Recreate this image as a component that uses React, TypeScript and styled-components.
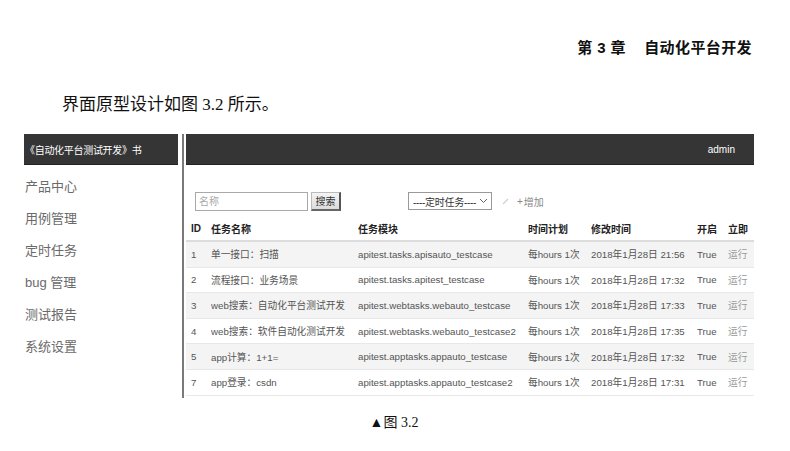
import React from "react";
import styled, { createGlobalStyle } from "styled-components";

const Global = createGlobalStyle`
  html, body { margin: 0; padding: 0; background: #fff; }
  body { font-family: "Liberation Sans", "Noto Sans CJK SC", sans-serif; }
`;

const Page = styled.div`
  width: 790px;
  height: 451px;
  position: relative;
  overflow: hidden;
  background: #fff;
`;

const ChapterHead = styled.div`
  padding: 38px 38px 0 0;
  text-align: right;
  font-family: "Liberation Sans", "Noto Sans CJK SC", sans-serif;
  font-weight: 700;
  font-size: 15px;
  line-height: 20px;
  letter-spacing: 0.4px;
  color: #111;
  white-space: pre;
`;

const Para = styled.p`
  margin: 35px 0 0 62px;
  font-family: "Liberation Serif", "Noto Sans CJK SC", serif;
  font-size: 17px;
  line-height: 24px;
  color: #111;
`;

const Figure = styled.div`
  margin: 17px 0 0 24px;
  width: 730px;
  height: 264px;
  display: flex;
`;

const Sidebar = styled.div`
  width: 154px;
  display: flex;
  flex-direction: column;
`;

const DarkBar = styled.div<{ $justify?: string }>`
  height: 31px;
  background: #353535;
  border-bottom: 1px solid #222;
  box-sizing: border-box;
  display: flex;
  align-items: center;
  justify-content: ${(p) => p.$justify || "flex-start"};
  color: #fff;
  font-size: 10px;
  font-family: "Liberation Sans", "Noto Sans CJK SC", sans-serif;
`;

const BrandText = styled.span`
  padding-left: 1px;
  letter-spacing: -0.3px;
`;

const AdminText = styled.span`
  padding-right: 19px;
`;

const NavList = styled.div`
  padding-top: 6px;
  display: flex;
  flex-direction: column;
`;

const NavItem = styled.div`
  height: 32px;
  line-height: 32px;
  padding-left: 1px;
  font-size: 13px;
  color: #6a6a6a;
`;

const Divider = styled.div`
  width: 2px;
  background: #7a7a7a;
  margin: 0 2px 0 4px;
`;

const Main = styled.div`
  flex: 1;
  display: flex;
  flex-direction: column;
`;

const Content = styled.div`
  padding-top: 26px;
`;

const Toolbar = styled.div`
  display: flex;
  align-items: center;
  height: 20px;
  padding-left: 9px;
`;

const SearchInput = styled.div`
  width: 113px;
  height: 19px;
  box-sizing: border-box;
  border: 1px solid #a9a9a9;
  font-size: 10px;
  color: #aaa;
  line-height: 17px;
  padding-left: 3px;
`;

const SearchButton = styled.div`
  margin-left: 3px;
  width: 30px;
  height: 19px;
  box-sizing: border-box;
  border: 1px solid #bbb;
  border-right: 2px solid #555;
  border-bottom: 2px solid #666;
  background: linear-gradient(#f4f4f4, #dcdcdc);
  font-size: 10px;
  color: #333;
  display: flex;
  align-items: center;
  justify-content: center;
`;

const Select = styled.div`
  margin-left: 67px;
  width: 84px;
  height: 18px;
  box-sizing: border-box;
  border: 1px solid #999;
  font-size: 10px;
  color: #333;
  display: flex;
  align-items: center;
  justify-content: space-between;
  padding: 0 3px 0 4px;
  white-space: nowrap;
`;

const SelectText = styled.span`
  letter-spacing: -0.3px;
`;

const EditMark = styled.span`
  margin-left: 10px;
  display: flex;
  align-items: center;
`;

const AddLink = styled.span`
  margin-left: 8px;
  font-size: 10px;
  color: #888;
  display: flex;
  align-items: center;
  gap: 1px;
`;

const Table = styled.div`
  margin-top: 6px;
`;

const Row = styled.div<{ $head?: boolean; $shade?: boolean }>`
  display: grid;
  grid-template-columns: 20px 147px 170px 63px 106px 31px 1fr;
  align-items: center;
  padding-left: 5px;
  height: ${(p) => (p.$head ? "25px" : "25.6px")};
  box-sizing: border-box;
  font-size: ${(p) => (p.$head ? "10px" : "9.7px")};
  font-weight: ${(p) => (p.$head ? 700 : 400)};
  color: ${(p) => (p.$head ? "#222" : "#555")};
  background: ${(p) => (p.$shade ? "#f4f4f4" : "#fff")};
  border-bottom: ${(p) => (p.$head ? "2px solid #dcdcdc" : "1px solid #e8e8e8")};
  white-space: nowrap;
`;

const Cell = styled.span<{ $muted?: boolean }>`
  color: ${(p) => (p.$muted ? "#9a9a9a" : "inherit")};
  overflow: hidden;
`;

const Caption = styled.div`
  margin-top: 16px;
  text-align: center;
  padding-right: 2px;
  font-family: "Liberation Serif", "Noto Sans CJK SC", serif;
  font-size: 14px;
  line-height: 18px;
  color: #111;
`;

const rows = [
  ["1", "单一接口：扫描", "apitest.tasks.apisauto_testcase", "每hours 1次", "2018年1月28日 21:56"],
  ["2", "流程接口：业务场景", "apitest.tasks.apitest_testcase", "每hours 1次", "2018年1月28日 17:32"],
  ["3", "web搜索：自动化平台测试开发", "apitest.webtasks.webauto_testcase", "每hours 1次", "2018年1月28日 17:33"],
  ["4", "web搜索：软件自动化测试开发", "apitest.webtasks.webauto_testcase2", "每hours 1次", "2018年1月28日 17:35"],
  ["5", "app计算：1+1=", "apitest.apptasks.appauto_testcase", "每hours 1次", "2018年1月28日 17:32"],
  ["7", "app登录：csdn", "apitest.apptasks.appauto_testcase2", "每hours 1次", "2018年1月28日 17:31"],
];

const navs = ["产品中心", "用例管理", "定时任务", "bug 管理", "测试报告", "系统设置"];

export default function App() {
  return (
    <Page>
      <Global />
      <ChapterHead>{"第 3 章    自动化平台开发"}</ChapterHead>
      <Para>界面原型设计如图 3.2 所示。</Para>
      <Figure>
        <Sidebar>
          <DarkBar>
            <BrandText>《自动化平台测试开发》书</BrandText>
          </DarkBar>
          <NavList>
            {navs.map((n) => (
              <NavItem key={n}>{n}</NavItem>
            ))}
          </NavList>
        </Sidebar>
        <Divider />
        <Main>
          <DarkBar $justify="flex-end">
            <AdminText>admin</AdminText>
          </DarkBar>
          <Content>
            <Toolbar>
              <SearchInput>名称</SearchInput>
              <SearchButton>搜索</SearchButton>
              <Select>
                <SelectText>----定时任务----</SelectText>
                <svg width="9" height="6" viewBox="0 0 9 6">
                  <path d="M1 1 L4.5 4.5 L8 1" fill="none" stroke="#666" strokeWidth="1" />
                </svg>
              </Select>
              <EditMark>
                <svg width="7" height="7" viewBox="0 0 7 7">
                  <path d="M1 6 L6 1" stroke="#d0d0d0" strokeWidth="1.2" />
                </svg>
              </EditMark>
              <AddLink>
                <span>+</span>
                <span>增加</span>
              </AddLink>
            </Toolbar>
            <Table>
              <Row $head>
                <Cell>ID</Cell>
                <Cell>任务名称</Cell>
                <Cell>任务模块</Cell>
                <Cell>时间计划</Cell>
                <Cell>修改时间</Cell>
                <Cell>开启</Cell>
                <Cell>立即</Cell>
              </Row>
              {rows.map((r, i) => (
                <Row key={r[0]} $shade={i % 2 === 0}>
                  <Cell>{r[0]}</Cell>
                  <Cell>{r[1]}</Cell>
                  <Cell>{r[2]}</Cell>
                  <Cell>{r[3]}</Cell>
                  <Cell>{r[4]}</Cell>
                  <Cell>True</Cell>
                  <Cell $muted>运行</Cell>
                </Row>
              ))}
            </Table>
          </Content>
        </Main>
      </Figure>
      <Caption>▲图 3.2</Caption>
    </Page>
  );
}
